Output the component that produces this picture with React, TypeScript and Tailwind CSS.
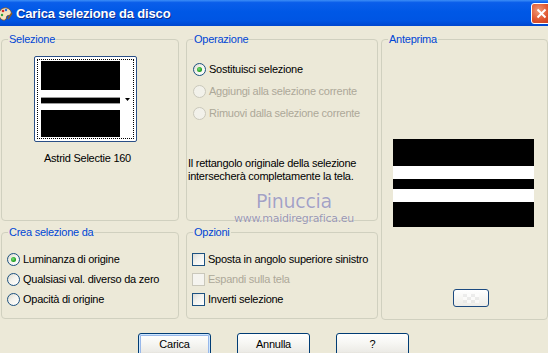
import React from "react";

function Radio({ checked = false, disabled = false }: { checked?: boolean; disabled?: boolean }) {
  return (
    <span
      className={
        "flex h-[13px] w-[13px] shrink-0 items-center justify-center rounded-full border " +
        (disabled
          ? "border-[#CAC8BB] bg-[#F2F1EA]"
          : "border-[#1C5180] bg-[linear-gradient(135deg,#DCD9CB_0%,#F4F3EE_45%,#FFFFFF_100%)]")
      }
    >
      {checked && (
        <span className="h-[5px] w-[5px] rounded-full bg-[radial-gradient(circle_at_40%_40%,#7BE07B_0%,#21A121_60%,#118611_100%)]" />
      )}
    </span>
  );
}

function Check({ disabled = false }: { disabled?: boolean }) {
  return (
    <span
      className={
        "block h-[13px] w-[13px] shrink-0 border " +
        (disabled
          ? "border-[#CAC8BB] bg-[#F5F4EF]"
          : "border-[#1C5180] bg-[linear-gradient(135deg,#DCDCD7_0%,#F2F2EE_45%,#FFFFFF_100%)]")
      }
    />
  );
}

function Group({
  title,
  className,
  children,
}: {
  title: string;
  className: string;
  children?: React.ReactNode;
}) {
  return (
    <fieldset className={"relative rounded-[4px] border border-[#D0D0BF] " + className}>
      <legend className="ml-[6px] px-[1px] text-[11px] leading-[13px] text-[#0046D5]">{title}</legend>
      {children}
    </fieldset>
  );
}

function XpButton({ label, isDefault = false }: { label: string; isDefault?: boolean }) {
  return (
    <button
      className={
        "h-[23px] w-[73px] rounded-[3px] border border-[#003C74] bg-[linear-gradient(to_bottom,#FFFFFF_0%,#F7F7F4_40%,#ECEBE6_85%,#D6D0C5_100%)] text-[11px] leading-[13px] text-black " +
        (isDefault ? "shadow-[inset_0_0_0_1px_#CEE7FF,inset_0_0_0_2px_#98B8EA]" : "")
      }
    >
      {label}
    </button>
  );
}

function Row({ children, className = "" }: { children: React.ReactNode; className?: string }) {
  return <div className={"flex h-[13px] items-center gap-[3px] " + className}>{children}</div>;
}

export default function App() {
  return (
    <div className="h-[353px] w-[548px] overflow-hidden bg-[#ECE9D8] font-['Liberation_Sans',Arial,sans-serif] text-[11px] leading-[13px] tracking-[-0.25px] text-black">
      {/* title bar */}
      <div className="flex h-[26px] items-center bg-[linear-gradient(to_bottom,#3C8EF7_0%,#0A5EEA_10%,#0058E6_45%,#0055E3_80%,#0047CF_100%)]">
        <svg width="16" height="16" viewBox="0 0 16 16" className="ml-[-3px] shrink-0">
          <path d="M2 9c0-4 4-7 8-6 3 1 5 4 4 6-1 2-3 1-4 2s0 3-2 4c-3 1-6-2-6-6z" fill="#F3E2C0" stroke="#7A4A1E" strokeWidth="0.8" />
          <circle cx="6" cy="6" r="1.3" fill="#D32B2B" />
          <circle cx="9" cy="5" r="1.2" fill="#2A6AD8" />
          <circle cx="5" cy="10" r="1.2" fill="#2FA03A" />
          <path d="M11 14 L15 8" stroke="#8B5A2B" strokeWidth="1.6" />
        </svg>
        <span className="ml-[3px] text-[13px] font-bold tracking-[-0.15px] text-white [text-shadow:1px_1px_0_#0A2A8C]">
          Carica selezione da disco
        </span>
        <div className="ml-auto mr-[-4px] flex h-[21px] w-[21px] items-center justify-center rounded-[3px] border border-white bg-[radial-gradient(circle_at_35%_35%,#F09A78_0%,#E0552E_55%,#C1391B_100%)]">
          <svg width="11" height="11" viewBox="0 0 11 11">
            <path d="M1.5 1.5 L9.5 9.5 M9.5 1.5 L1.5 9.5" stroke="white" strokeWidth="2" />
          </svg>
        </div>
      </div>

      {/* groups */}
      <div className="flex pl-[1px] pt-[7px]">
        <div className="flex flex-col">
          <div className="flex gap-[7px]">
            <Group title="Selezione" className="h-[188px] w-[178px]">
              <div className="ml-[32px] mt-[10px] h-[86px] w-[103px] rounded-[2px] border border-[#2A4F86] bg-white p-[2px]">
                <div className="flex h-full w-full border border-dotted border-black px-[3px] py-[1px]">
                  <div className="flex w-[79px] flex-col">
                    <div className="h-[29px] bg-black" />
                    <div className="h-[7px] bg-white" />
                    <div className="h-[1px] bg-[#9A9A9A]" />
                    <div className="h-[5px] bg-black" />
                    <div className="h-[1px] bg-[#9A9A9A]" />
                    <div className="h-[6px] bg-white" />
                    <div className="flex-1 bg-black" />
                  </div>
                  <div className="flex flex-1 items-center justify-end">
                    <svg width="5" height="3" viewBox="0 0 5 3">
                      <path d="M0 0 H5 L2.5 3 Z" fill="black" />
                    </svg>
                  </div>
                </div>
              </div>
              <div className="mt-[10px] w-[171px] text-center">Astrid Selectie 160</div>
            </Group>

            <Group title="Operazione" className="h-[188px] w-[192px]">
              <div className="ml-[6px] mt-[17px] flex flex-col gap-[9px]">
                <Row>
                  <Radio checked />
                  <span>Sostituisci selezione</span>
                </Row>
                <Row className="text-[#ACA899]">
                  <Radio disabled />
                  <span>Aggiungi alla selezione corrente</span>
                </Row>
                <Row className="text-[#ACA899]">
                  <Radio disabled />
                  <span>Rimuovi dalla selezione corrente</span>
                </Row>
              </div>
              <p className="ml-[1px] mt-[37px]">
                Il rettangolo originale della selezione
                <br />
                intersecherà completamente la tela.
              </p>
              <div className="pointer-events-none absolute left-[46px] top-[144px] flex w-[122px] flex-col items-center">
                <span className="font-['DejaVu_Sans',sans-serif] text-[19px] leading-[22px] tracking-[-0.3px] text-[#A4A2C2] [text-shadow:0_0_1px_#ffffff]">
                  Pinuccia
                </span>
                <span className="font-['DejaVu_Sans',sans-serif] text-[11px] leading-[14px] tracking-[-0.3px] text-[#9896AE] [text-shadow:0_0_1px_#ffffff]">
                  www.maidiregrafica.eu
                </span>
              </div>
            </Group>
          </div>

          <div className="mt-[5px] flex gap-[7px]">
            <Group title="Crea selezione da" className="h-[93px] w-[178px]">
              <div className="ml-[5px] mt-[14px] flex flex-col gap-[7px]">
                <Row>
                  <Radio checked />
                  <span>Luminanza di origine</span>
                </Row>
                <Row>
                  <Radio />
                  <span>Qualsiasi val. diverso da zero</span>
                </Row>
                <Row>
                  <Radio />
                  <span>Opacità di origine</span>
                </Row>
              </div>
            </Group>

            <Group title="Opzioni" className="h-[93px] w-[192px]">
              <div className="ml-[5px] mt-[14px] flex flex-col gap-[7px]">
                <Row>
                  <Check />
                  <span>Sposta in angolo superiore sinistro</span>
                </Row>
                <Row className="text-[#ACA899]">
                  <Check disabled />
                  <span>Espandi sulla tela</span>
                </Row>
                <Row>
                  <Check />
                  <span>Inverti selezione</span>
                </Row>
              </div>
            </Group>
          </div>
        </div>

        <Group title="Anteprima" className="ml-[3px] h-[287px] w-[167px]">
          <div className="ml-[11px] mt-[93px] flex h-[88px] w-[141px] flex-col">
            <div className="h-[27px] bg-black" />
            <div className="h-[13px] bg-white" />
            <div className="h-[10px] bg-black" />
            <div className="h-[13px] bg-white" />
            <div className="flex-1 bg-black" />
          </div>
          <div className="ml-[71px] mt-[62px] flex h-[18px] w-[36px] items-center justify-center rounded-[3px] border border-[#1C4A80] bg-[linear-gradient(to_bottom,#FFFFFF,#EEEDE8)]">
            <div className="grid grid-cols-4 opacity-60">
              {Array.from({ length: 12 }).map((_, i) => (
                <div
                  key={i}
                  className={
                    "h-[3px] w-[4px] " +
                    ((Math.floor(i / 4) + (i % 4)) % 2 === 0 ? "bg-[#E4E4E4]" : "bg-white")
                  }
                />
              ))}
            </div>
          </div>
        </Group>
      </div>

      {/* buttons */}
      <div className="mt-[13px] flex gap-[26px] pl-[138px]">
        <XpButton label="Carica" isDefault />
        <XpButton label="Annulla" />
        <XpButton label="?" />
      </div>
    </div>
  );
}
